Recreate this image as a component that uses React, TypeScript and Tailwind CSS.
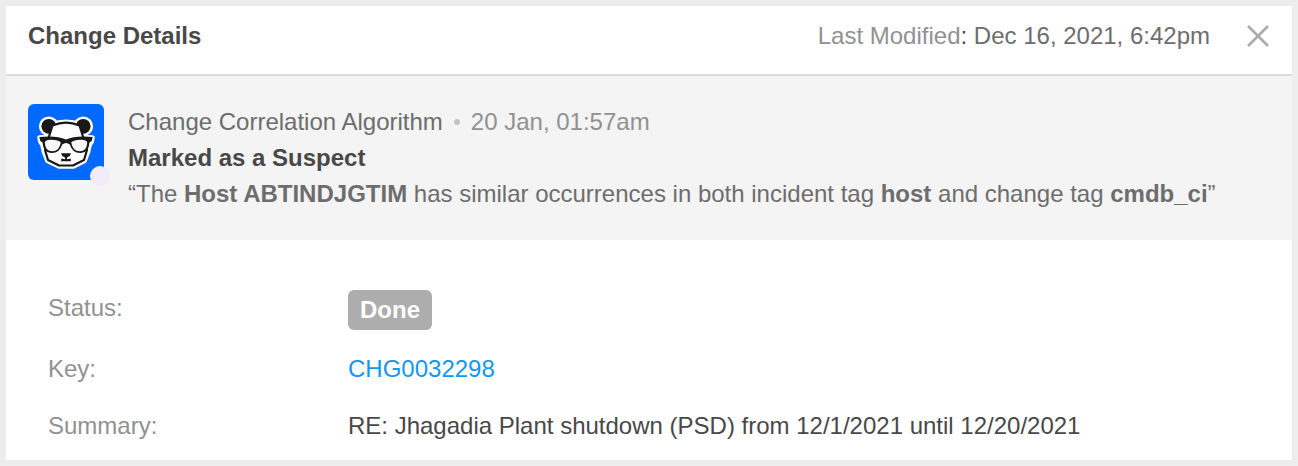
import type { ReactNode } from 'react';

function PandaAvatar() {
  return (
    <div className="relative shrink-0">
      <svg viewBox="0 0 76 76" className="size-[76px] rounded-md bg-[#0069ff]" aria-hidden="true">
        {/* white halo */}
        <g fill="#fff" stroke="#fff" strokeWidth="4.6" strokeLinejoin="round">
          <circle cx="20.8" cy="22.3" r="7.6" />
          <circle cx="55.2" cy="22.3" r="7.6" />
          <path d="M23 21Q38 14.500 53 21L57 33L64.500 33.500L63.500 38L61.500 41L60 48L56.500 57L45.500 62.500H31L19.500 57L16 48L14.500 41L12.500 38L11.500 33.500L19 33Z" />
        </g>
        <g fill="#181818">
          <circle cx="20.8" cy="22.3" r="7.4" />
          <circle cx="55.2" cy="22.3" r="7.4" />
        </g>
        {/* head */}
        <path
          d="M24.500 21.500Q38 15.800 51.500 21.500L54.500 31L59 46L56 56L45 61.500H31L20 56L17 46L21.500 31Z"
          fill="#fff"
          stroke="#181818"
          strokeWidth="2.2"
          strokeLinejoin="round"
        />
        {/* glasses */}
        <path
          d="M11.300 33L21 32.500Q31 32.500 38 35.500Q45 32.500 55 32.500L64.700 33L63.700 37L61.500 38.500Q60.800 48.500 53 49Q44.500 49.500 41.800 40.500Q38 37.300 34.200 40.500Q31.500 49.500 23 49Q15.200 48.500 14.500 38.500L12.300 37Z"
          fill="#181818"
        />
        <path d="M16.800 38.500Q17.500 35.800 22.500 35.800Q30 35.600 32.800 38.300Q31.500 47.300 24.300 47.300Q17 47.300 16.800 38.500Z" fill="#f7f7f7" />
        <path d="M59.200 38.500Q58.500 35.800 53.500 35.800Q46 35.600 43.200 38.300Q44.500 47.300 51.700 47.300Q59 47.300 59.200 38.500Z" fill="#f7f7f7" />
        {/* nose and mouth */}
        <path d="M33 49.300H43L41.800 52L39 53.500V55.300L42.800 54.600V57.200H33.200V54.600L37 55.300V53.500L34.200 52Z" fill="#181818" />
      </svg>
      <span className="absolute -right-1.5 -bottom-1.5 size-5 rounded-full border border-[#f1eff5] bg-[#f1ebfa]" />
    </div>
  );
}

function DetailRow({ label, children }: { label: string; children: ReactNode }) {
  return (
    <div className="flex items-start">
      <dt className="w-[300px] shrink-0 text-[#919191]">{label}:</dt>
      <dd className="min-w-0">{children}</dd>
    </div>
  );
}

export default function App() {
  return (
    <div className="bg-[#ededed] p-1.5 font-['Liberation_Sans',Arial,sans-serif] text-2xl leading-9 text-[#484848]">
      <section className="bg-white">
        <header className="flex items-center justify-between border-b-2 border-[#dcdcdc] pt-3 pr-[22px] pb-5 pl-[22px]">
          <h1 className="font-bold">Change Details</h1>
          <div className="flex items-center gap-9">
            <p className="text-[#6d6d6d]">
              <span className="text-[#919191]">Last Modified</span>
              <span className="text-[#484848]">:</span> Dec 16, 2021, 6:42pm
            </p>
            <button type="button" aria-label="Close" className="text-[#ababab]">
              <svg viewBox="0 0 24 24" className="size-6" fill="none" stroke="currentColor" strokeWidth="2.6">
                <path d="M2 2L22 22M22 2L2 22" />
              </svg>
            </button>
          </div>
        </header>

        {/* Correlation */}
        <div className="flex items-start gap-6 bg-[#f4f4f4] px-[22px] py-7">
          <PandaAvatar />
          <div className="min-w-0 text-[#6d6d6d]">
            <div className="flex items-center">
              <span>Change Correlation Algorithm</span>
              <span className="mx-[11px] size-1.5 rounded-full bg-[#c4c4c4]" />
              <time className="text-[#919191]">20 Jan, 01:57am</time>
            </div>
            <h2 className="font-bold text-[#484848]">Marked as a Suspect</h2>
            <p>
              “The <b>Host ABTINDJGTIM</b> has similar occurrences in both incident tag <b>host</b> and
              change tag <b>cmdb_ci</b>”
            </p>
          </div>
        </div>

        {/* Fields */}
        <dl className="flex flex-col gap-[21px] px-[42px] pt-[50px] pb-4">
          <DetailRow label="Status">
            <span className="block rounded-md bg-[#adadad] px-3 leading-10 font-bold text-white">Done</span>
          </DetailRow>
          <DetailRow label="Key">
            <a href="#CHG0032298" className="text-[#0f97f2] hover:underline">
              CHG0032298
            </a>
          </DetailRow>
          <DetailRow label="Summary">RE: Jhagadia Plant shutdown (PSD) from 12/1/2021 until 12/20/2021</DetailRow>
        </dl>
      </section>
    </div>
  );
}
